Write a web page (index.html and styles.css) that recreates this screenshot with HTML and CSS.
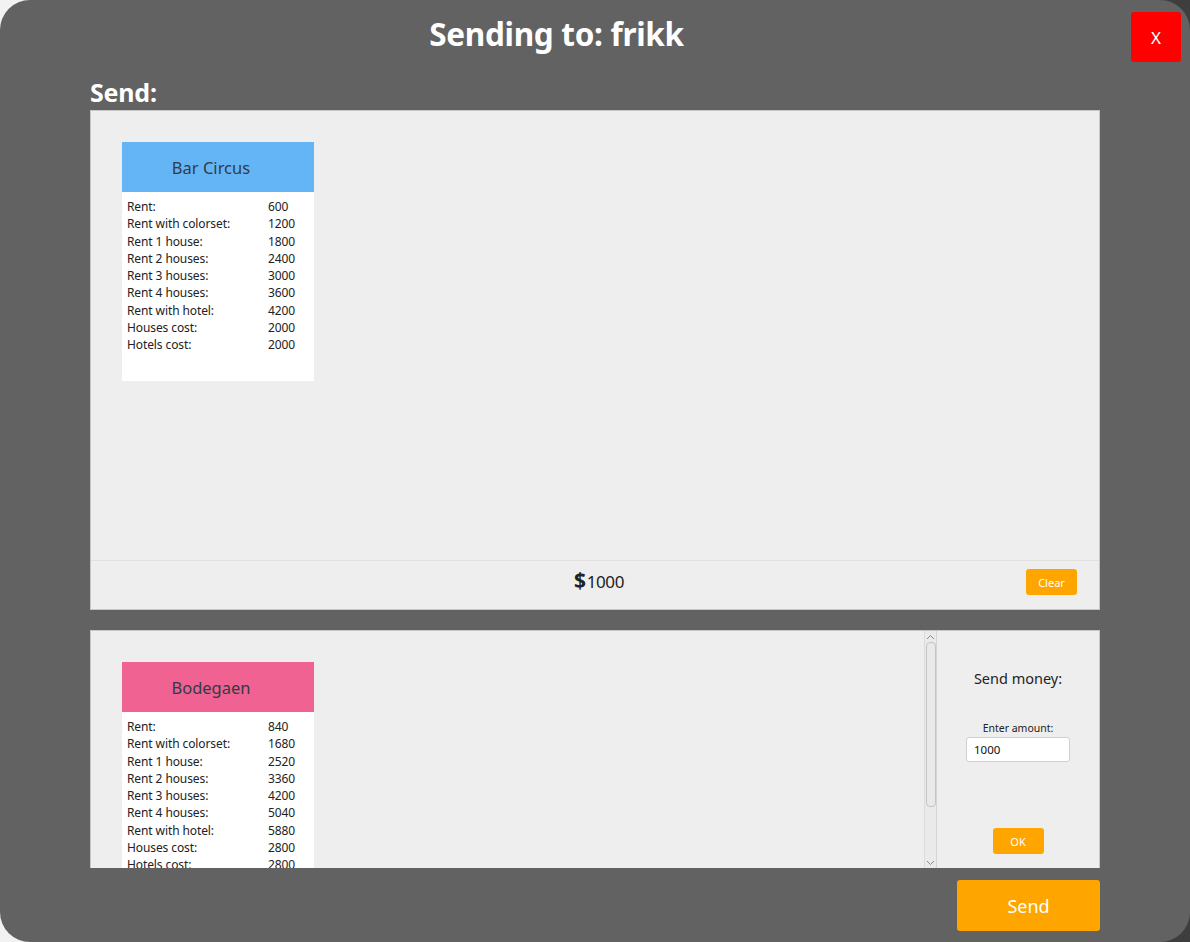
FILE: index.html
```html
<!DOCTYPE html>
<html>
<head>
<meta charset="utf-8">
<link rel="stylesheet" href="styles.css">
</head>
<body>
<div class="window">
  <header class="header">
    <h1 class="title">Sending to: frikk</h1>
    <button class="close-btn">X</button>
  </header>
  <main class="content">
    <h2 class="section-label">Send:</h2>
    <section class="send-panel">
      <div class="card-area">
        <div class="card">
          <div class="card-head blue">Bar Circus</div>
          <div class="card-body">
            <span>Rent:</span><span>600</span>
            <span>Rent with colorset:</span><span>1200</span>
            <span>Rent 1 house:</span><span>1800</span>
            <span>Rent 2 houses:</span><span>2400</span>
            <span>Rent 3 houses:</span><span>3000</span>
            <span>Rent 4 houses:</span><span>3600</span>
            <span>Rent with hotel:</span><span>4200</span>
            <span>Houses cost:</span><span>2000</span>
            <span>Hotels cost:</span><span>2000</span>
          </div>
        </div>
      </div>
      <div class="money-row">
        <div class="money"><span class="dollar">$</span>1000</div>
        <button class="small-btn clear-btn">Clear</button>
      </div>
    </section>
    <section class="own-panel">
      <div class="own-scroll">
        <div class="card-area own">
          <div class="card">
            <div class="card-head pink">Bodegaen</div>
            <div class="card-body">
              <span>Rent:</span><span>840</span>
              <span>Rent with colorset:</span><span>1680</span>
              <span>Rent 1 house:</span><span>2520</span>
              <span>Rent 2 houses:</span><span>3360</span>
              <span>Rent 3 houses:</span><span>4200</span>
              <span>Rent 4 houses:</span><span>5040</span>
              <span>Rent with hotel:</span><span>5880</span>
              <span>Houses cost:</span><span>2800</span>
              <span>Hotels cost:</span><span>2800</span>
            </div>
          </div>
        </div>
        <div class="scrollbar">
          <svg class="arrow" width="9" height="6" viewBox="0 0 9 6"><path d="M1 5 L4.5 1.5 L8 5" fill="none" stroke="#8a8a8a" stroke-width="1"/></svg>
          <div class="thumb"></div>
          <svg class="arrow down" width="9" height="6" viewBox="0 0 9 6"><path d="M1 1 L4.5 4.5 L8 1" fill="none" stroke="#8a8a8a" stroke-width="1"/></svg>
        </div>
      </div>
      <div class="money-side">
        <div class="side-title">Send money:</div>
        <label class="amount-label">Enter amount:</label>
        <input class="amount-input" type="text" value="1000">
        <button class="small-btn ok-btn">OK</button>
      </div>
    </section>
    <div class="footer">
      <button class="send-btn">Send</button>
    </div>
  </main>
</div>
</body>
</html>
```

FILE: styles.css
```css
* { box-sizing: border-box; }
html, body { margin: 0; padding: 0; }
body {
  width: 1190px;
  height: 942px;
  overflow: hidden;
  background: linear-gradient(to right, #f2f2f2 50%, #3e3e3e 50%);
  font-family: "Noto Sans", "Open Sans", sans-serif;
}
.window {
  width: 1190px;
  height: 942px;
  background: #626262;
  border-radius: 30px;
  display: flex;
  flex-direction: column;
  overflow: hidden;
}
.header {
  display: grid;
  grid-template-columns: 1fr 50px;
  column-gap: 18px;
  padding: 12px 9px 0 0;
  height: 76px;
}
.title {
  margin: 0;
  text-align: center;
  color: #ffffff;
  font-weight: 700;
  font-size: 31.5px;
  line-height: 44px;
  letter-spacing: -0.3px;
}
.close-btn {
  width: 50px;
  height: 50px;
  background: #ff0000;
  border: none;
  border-radius: 3px;
  color: #ffffff;
  font-family: "Noto Sans", sans-serif;
  font-size: 17px;
  padding: 0;
}
.content {
  padding: 0 90px 0 90px;
  display: flex;
  flex-direction: column;
}
.section-label {
  margin: 0;
  color: #ffffff;
  font-weight: 700;
  font-size: 25px;
  line-height: 32px;
  height: 34px;
  letter-spacing: -0.2px;
}
.send-panel {
  height: 500px;
  background: #eeeeee;
  border: 1px solid #c6c6c6;
  display: flex;
  flex-direction: column;
}
.card-area {
  flex: 1;
  padding: 31px 0 0 31px;
}
.card {
  width: 192px;
  background: #ffffff;
}
.card-head {
  height: 50px;
  display: flex;
  align-items: center;
  justify-content: center;
  padding-right: 14px;
  color: #333a44;
  font-size: 16.5px;
  font-family: "Noto Sans", sans-serif;
}
.card-head.blue { background: #64b5f6; }
.card-head.pink { background: #f06292; }
.card-body {
  display: grid;
  grid-template-columns: 141px 1fr;
  padding: 6px 0 27px 5px;
  font-size: 12px;
  line-height: 17.3px;
  color: #222222;
  letter-spacing: -0.1px;
}
.money-row {
  height: 49px;
  border-top: 1px solid #e0e0e0;
  display: flex;
  align-items: center;
  justify-content: center;
  position: relative;
  padding-bottom: 8px;
}
.money {
  font-size: 17px;
  line-height: 24px;
  color: #222222;
  letter-spacing: -0.4px;
  margin-left: 8px;
}
.dollar {
  font-weight: 700;
  font-size: 21px;
  margin-right: 1px;
}
.small-btn {
  width: 51px;
  height: 26px;
  background: #ffa500;
  border: none;
  border-radius: 3px;
  color: #ffffff;
  font-family: "Noto Sans", sans-serif;
  font-size: 11px;
  padding: 0;
}
.clear-btn {
  position: absolute;
  right: 22px;
  top: 8px;
}
.own-panel {
  margin-top: 20px;
  height: 238px;
  background: #eeeeee;
  border: 1px solid #c6c6c6;
  border-bottom: none;
  display: flex;
  overflow: hidden;
}
.own-scroll {
  flex: 1;
  display: flex;
  overflow: hidden;
}
.card-area.own {
  padding-top: 31px;
}
.scrollbar {
  width: 13px;
  border-left: 1px solid #dcdcdc;
  border-right: 1px solid #d4d4d4;
  background: #eaeaea;
  display: flex;
  flex-direction: column;
  align-items: center;
}
.arrow { margin-top: 3px; flex: none; }
.arrow.down { margin-top: auto; margin-bottom: 2px; }
.thumb {
  width: 10px;
  height: 165px;
  margin-top: 2px;
  background: #e9e9e9;
  border: 1px solid #c4c4c4;
  border-radius: 4px;
}
.money-side {
  width: 162px;
  display: flex;
  flex-direction: column;
  align-items: center;
  color: #222222;
}
.side-title {
  margin-top: 36px;
  font-size: 14.5px;
  line-height: 22px;
}
.amount-label {
  margin-top: 32px;
  font-size: 10.5px;
  line-height: 14px;
}
.amount-input {
  margin-top: 2px;
  width: 104px;
  height: 25px;
  border: 1px solid #cfcfcf;
  border-radius: 3px;
  background: #ffffff;
  font-family: "Noto Sans", sans-serif;
  font-size: 11.5px;
  padding: 0 0 0 7px;
  color: #111111;
  outline: none;
}
.ok-btn {
  margin-top: 66px;
}
.footer {
  margin-top: 12px;
  display: flex;
  justify-content: flex-end;
}
.send-btn {
  width: 143px;
  height: 51px;
  background: #ffa500;
  border: none;
  border-radius: 3px;
  color: #ffffff;
  font-family: "Noto Sans", sans-serif;
  font-size: 18px;
  padding: 0;
}
```
